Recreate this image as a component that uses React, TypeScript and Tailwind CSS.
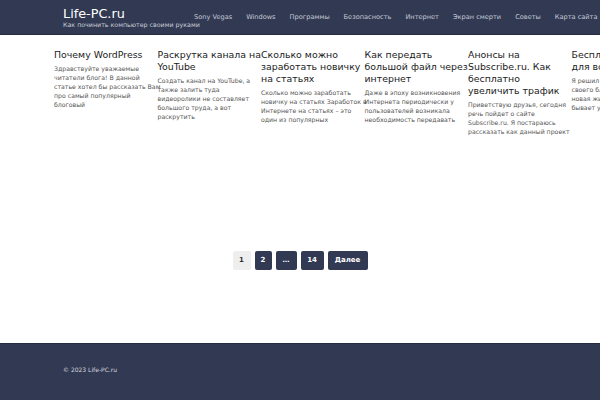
import React from "react";

const nav = ["Sony Vegas", "Windows", "Программы", "Безопасность", "Интернет", "Экран смерти", "Советы", "Карта сайта"];

// строки заголовков и анонсов разбиты как на скриншоте
const posts = [
  {
    title: ["Почему WordPress"],
    text: ["Здравствуйте уважаемые", "читатели блога! В данной", "статье хотел бы рассказать Вам", "про самый популярный", "блоговый"],
  },
  {
    title: ["Раскрутка канала на", "YouTube"],
    text: ["Создать канал на YouTube, а", "также залить туда", "видеоролики не составляет", "большого труда, а вот", "раскрутить"],
  },
  {
    title: ["Сколько можно", "заработать новичку", "на статьях"],
    text: ["Сколько можно заработать", "новичку на статьях Заработок в", "Интернете на статьях – это", "один из популярных"],
  },
  {
    title: ["Как передать", "большой файл через", "интернет"],
    text: ["Даже в эпоху возникновения", "Интернета периодически у", "пользователей возникала", "необходимость передавать"],
  },
  {
    title: ["Анонсы на", "Subscribe.ru. Как", "бесплатно", "увеличить трафик"],
    text: ["Приветствую друзья, сегодня", "речь пойдет о сайте", "Subscribe.ru. Я постараюсь", "рассказать как данный проект"],
  },
  {
    title: ["Бесплатный хостинг", "для всех"],
    text: ["Я решил рассказать", "своего блога, ведь", "новая жизнь сайта", "бывает у всех"],
  },
];

export default function App() {
  return (
    <div className="w-[600px] h-[400px] overflow-hidden bg-white flex flex-col font-['DejaVu_Sans',sans-serif]">
      {/* шапка */}
      <header className="h-[35px] shrink-0 bg-[#323a53] border-b border-[#262c40] flex items-center pl-[63px] overflow-hidden">
        <div className="flex flex-col w-[131px] shrink-0">
          <div className="text-[12.8px] leading-[15px] text-white">Life-PC.ru</div>
          <div className="text-[6.3px] leading-[8px] text-[#c9ccd6] whitespace-nowrap">Как починить компьютер своими руками</div>
        </div>
        <nav className="flex items-center gap-[14px] text-[6.6px] text-[#c4c8d4] whitespace-nowrap mt-[1px]">
          {nav.map((n) => (
            <span key={n}>{n}</span>
          ))}
        </nav>
      </header>

      {/* записи */}
      <main className="flex-1 flex flex-col">
        <div className="flex pl-[54px] pt-[14px]">
          {posts.map((p) => (
            <div key={p.title[0]} className="w-[103.5px] shrink-0 whitespace-nowrap">
              <h2 className="text-[9.4px] leading-[12px] text-[#222]">
                {p.title.map((l) => (
                  <div key={l}>{l}</div>
                ))}
              </h2>
              <p className="mt-[3px] text-[6.2px] leading-[9px] text-[#555]">
                {p.text.map((l) => (
                  <span key={l} className="block">{l}</span>
                ))}
              </p>
            </div>
          ))}
        </div>

        <div className="mt-auto mb-[73px] flex justify-center gap-[4px] text-[7px] font-bold">
          <span className="h-[19px] w-[18px] flex items-center justify-center rounded-[2px] bg-[#eeeeee] text-[#333]">1</span>
          <span className="h-[19px] w-[17px] flex items-center justify-center rounded-[2px] bg-[#323a53] text-white">2</span>
          <span className="h-[19px] w-[21px] flex items-center justify-center rounded-[2px] bg-[#323a53] text-white">…</span>
          <span className="h-[19px] w-[23px] flex items-center justify-center rounded-[2px] bg-[#323a53] text-white">14</span>
          <span className="h-[19px] w-[40px] flex items-center justify-center rounded-[2px] bg-[#323a53] text-white">Далее</span>
        </div>
      </main>

      {/* подвал */}
      <footer className="h-[57px] shrink-0 bg-[#323a53] border-t border-[#262c40] pl-[63px] pt-[21px]">
        <div className="text-[6px] leading-[10px] text-[#d4d7df]">© 2023 Life-PC.ru</div>
      </footer>
    </div>
  );
}
